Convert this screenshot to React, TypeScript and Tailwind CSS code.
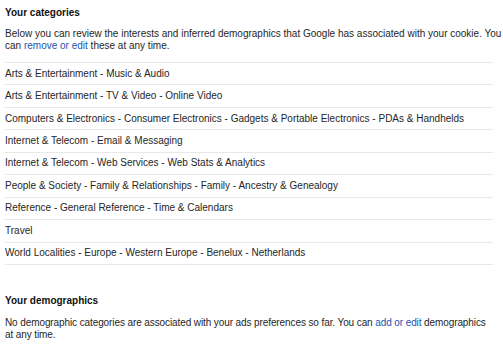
import React from "react";

const rows = [
  "Arts & Entertainment - Music & Audio",
  "Arts & Entertainment - TV & Video - Online Video",
  "Computers & Electronics - Consumer Electronics - Gadgets & Portable Electronics - PDAs & Handhelds",
  "Internet & Telecom - Email & Messaging",
  "Internet & Telecom - Web Services - Web Stats & Analytics",
  "People & Society - Family & Relationships - Family - Ancestry & Genealogy",
  "Reference - General Reference - Time & Calendars",
  "Travel",
  "World Localities - Europe - Western Europe - Benelux - Netherlands",
];

export default function App() {
  return (
    <div
      className="w-[503px] h-[345px] bg-white text-[#262626] overflow-hidden"
      style={{ fontFamily: '"Liberation Sans", Arial, sans-serif' }}
    >
      <div className="pl-[5px] pt-[7px] text-[10px] leading-[12px]">
        <h2 className="font-bold text-[#111]">Your categories</h2>
        <p className="mt-[9px] whitespace-nowrap">
          Below you can review the interests and inferred demographics that Google has associated with your cookie. You
          <br />
          can <a className="text-[#2254b4]">remove or edit</a> these at any time.
        </p>
        <ul className="mt-[10px] w-[488px] border-b border-[#e8e8e8]">
          {rows.map((r) => (
            <li
              key={r}
              className="h-[22.44px] border-t border-[#e8e8e8] flex items-center whitespace-nowrap"
            >
              {r}
            </li>
          ))}
        </ul>
        <h2 className="mt-[30px] font-bold text-[#111]">Your demographics</h2>
        <p className="mt-[10px] whitespace-nowrap tracking-[-0.1px]">
          No demographic categories are associated with your ads preferences so far. You can{" "}
          <a className="text-[#2254b4]">add or edit</a> demographics
          <br />
          at any time.
        </p>
      </div>
    </div>
  );
}
